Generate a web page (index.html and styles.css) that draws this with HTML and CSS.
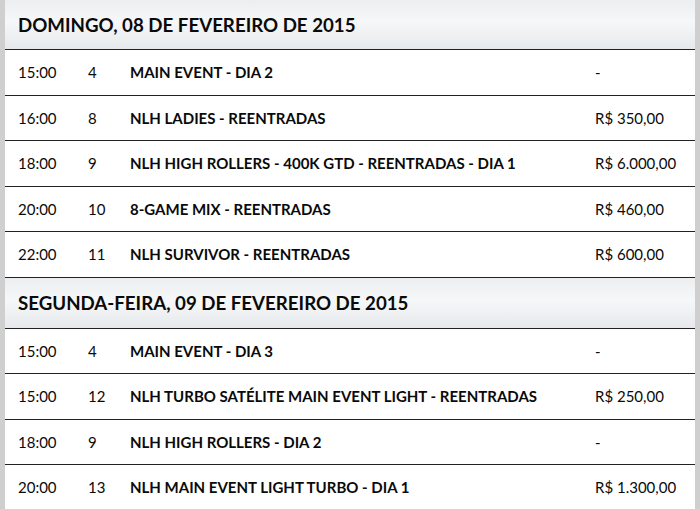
FILE: index.html
```html
<!DOCTYPE html>
<html lang="pt-BR">
<head>
<meta charset="utf-8">
<link rel="stylesheet" href="styles.css">
</head>
<body>
<div class="schedule">
  <div class="day">DOMINGO, 08 DE FEVEREIRO DE 2015</div>
  <div class="row"><span>15:00</span><span>4</span><span class="ev">MAIN EVENT - DIA 2</span><span>-</span></div>
  <div class="row"><span>16:00</span><span>8</span><span class="ev">NLH LADIES - REENTRADAS</span><span>R$ 350,00</span></div>
  <div class="row"><span>18:00</span><span>9</span><span class="ev">NLH HIGH ROLLERS - 400K GTD - REENTRADAS - DIA 1</span><span>R$ 6.000,00</span></div>
  <div class="row"><span>20:00</span><span>10</span><span class="ev">8-GAME MIX - REENTRADAS</span><span>R$ 460,00</span></div>
  <div class="row"><span>22:00</span><span>11</span><span class="ev">NLH SURVIVOR - REENTRADAS</span><span>R$ 600,00</span></div>
  <div class="day day-next">SEGUNDA-FEIRA, 09 DE FEVEREIRO DE 2015</div>
  <div class="row"><span>15:00</span><span>4</span><span class="ev">MAIN EVENT - DIA 3</span><span>-</span></div>
  <div class="row"><span>15:00</span><span>12</span><span class="ev">NLH TURBO SATÉLITE MAIN EVENT LIGHT - REENTRADAS</span><span>R$ 250,00</span></div>
  <div class="row"><span>18:00</span><span>9</span><span class="ev">NLH HIGH ROLLERS - DIA 2</span><span>-</span></div>
  <div class="row"><span>20:00</span><span>13</span><span class="ev">NLH MAIN EVENT LIGHT TURBO - DIA 1</span><span>R$ 1.300,00</span></div>
</div>
</body>
</html>
```
FILE: styles.css
```css
html, body {
  margin: 0;
  padding: 0;
  background: #cfcfcf;
  height: 509px;
  overflow: hidden;
}
.schedule {
  margin: 0 5px 0 5px;
  background: #fff;
  font-family: Lato, "Open Sans", sans-serif;
  color: #0a0a0a;
}
.day {
  height: 49px;
  display: flex;
  align-items: center;
  padding-left: 13px;
  font-size: 18.7px;
  font-weight: 700;
  background: linear-gradient(#eceef0, #f6f7f8 45%, #e6e9ec);
  border-bottom: 1px solid #222;
}
.day-next {
  height: 50px;
}
.row {
  height: 44.5px;
  display: grid;
  grid-template-columns: 70px 42px 465px 1fr;
  align-items: center;
  padding-left: 13px;
  font-size: 15px;
  border-bottom: 1px solid #222;
}
.ev {
  font-weight: 700;
}
```
